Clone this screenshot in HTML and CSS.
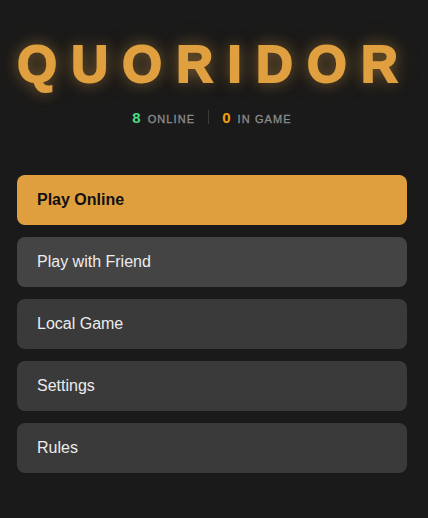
FILE: index.html
```html
<!DOCTYPE html>
<html>
<head>
<meta charset="utf-8">
<link rel="stylesheet" href="styles.css">
</head>
<body>
<main class="menu">
  <header class="hero">
    <h1 class="title">QUORIDOR</h1>
    <div class="stats">
      <span class="stat"><span class="num num-online">8</span><span class="label">ONLINE</span></span>
      <span class="sep"></span>
      <span class="stat"><span class="num num-game">0</span><span class="label">IN GAME</span></span>
    </div>
  </header>
  <nav class="buttons">
    <button class="btn btn-primary">Play Online</button>
    <button class="btn btn-hover">Play with Friend</button>
    <button class="btn">Local Game</button>
    <button class="btn">Settings</button>
    <button class="btn">Rules</button>
  </nav>
</main>
</body>
</html>
```
FILE: styles.css
```css
html, body {
  margin: 0;
  padding: 0;
  background: #1a1a1a;
  font-family: "Liberation Sans", Arial, sans-serif;
}
.menu {
  width: 390px;
  margin-left: 17px;
  padding-top: 37px;
  display: flex;
  flex-direction: column;
}
.hero {
  display: flex;
  flex-direction: column;
  align-items: center;
}
.title {
  margin: 0;
  font-size: 51px;
  line-height: 55px;
  font-weight: 700;
  letter-spacing: 14.3px;
  padding-left: 5.4px;
  color: #e0a040;
  -webkit-text-stroke: 2px #e0a040;
  text-shadow: 0 0 14px rgba(224, 160, 64, 0.5), 0 0 28px rgba(224, 160, 64, 0.22);
}
.stats {
  margin-top: 16px;
  display: flex;
  align-items: center;
  gap: 13px;
  height: 18px;
}
.stat {
  display: flex;
  align-items: baseline;
  gap: 7px;
}
.num {
  font-size: 15px;
  font-weight: 700;
}
.num-online { color: #4ade80; }
.num-game { color: #f59e0b; }
.label {
  font-size: 11px;
  font-weight: 400;
  letter-spacing: 1.1px;
  color: #8c8c8c;
  -webkit-text-stroke: 0.3px #8c8c8c;
}
.sep {
  width: 1px;
  height: 14px;
  background: #3c3c3c;
}
.buttons {
  margin-top: 49px;
  display: flex;
  flex-direction: column;
  gap: 12px;
}
.btn {
  height: 50px;
  border: none;
  border-radius: 8px;
  background: #3a3a3a;
  color: #ececec;
  font-family: "Liberation Sans", Arial, sans-serif;
  font-size: 16px;
  text-align: left;
  padding: 0 20px;
}
.btn-hover { background: #444444; }
.btn-primary {
  background: #e09f3e;
  color: #111;
  font-weight: 700;
}
```
